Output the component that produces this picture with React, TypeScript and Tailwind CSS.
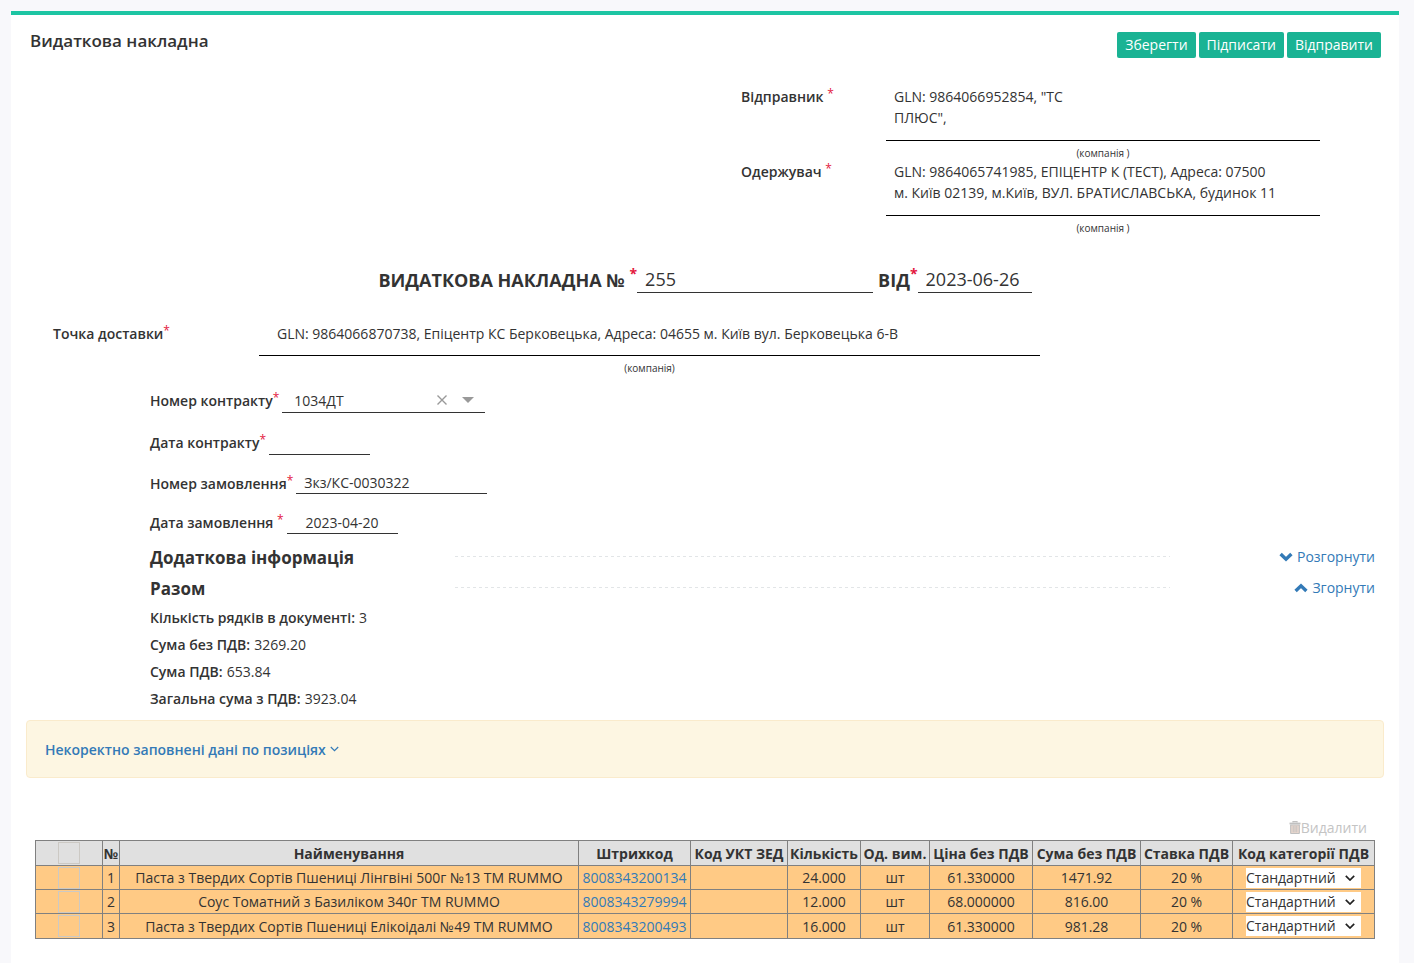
import { useState } from "react";
import type { ReactNode } from "react";

const rows = [
  { n: 1, name: "Паста з Твердих Сортів Пшениці Лінгвіні 500г №13 ТМ RUMMO", code: "8008343200134", qty: "24.000", price: "61.330000", sum: "1471.92" },
  { n: 2, name: "Соус Томатний з Базиліком 340г ТМ RUMMO", code: "8008343279994", qty: "12.000", price: "68.000000", sum: "816.00" },
  { n: 3, name: "Паста з Твердих Сортів Пшениці Елікоідалі №49 ТМ RUMMO", code: "8008343200493", qty: "16.000", price: "61.330000", sum: "981.28" },
];

const totals = [
  ["Кількість рядків в документі:", "3"],
  ["Сума без ПДВ:", "3269.20"],
  ["Сума ПДВ:", "653.84"],
  ["Загальна сума з ПДВ:", "3923.04"],
];

const headings = ["Штрихкод", "Код УКТ ЗЕД", "Кількість", "Од. вим.", "Ціна без ПДВ", "Сума без ПДВ", "Ставка ПДВ", "Код категорії ПДВ"];

function Star() {
  return <sup className="-top-1 text-xs font-normal leading-none text-[#e3173e]">*</sup>;
}

function Chevron({ up }: { up: boolean }) {
  return (
    <svg viewBox="0 0 14 10" className="h-2.5 w-3.5" fill="none" stroke="currentColor" strokeWidth="3.4" aria-hidden="true">
      <path d={up ? "M1.6 8 7 2.8 12.4 8" : "M1.6 2 7 7.2 12.4 2"} />
    </svg>
  );
}

function Trash() {
  return (
    <svg viewBox="0 0 12 13" className="h-[13px] w-3" aria-hidden="true">
      <path d="M4 1.6V.7H8V1.6" fill="none" stroke="#c0c0c0" strokeWidth="1.2" />
      <path d="M.5 1.6H11.5V3.4H.5Z" fill="#c0c0c0" />
      <path d="M1.7 4H10.3V11.8Q10.3 12.6 9.5 12.6H2.5Q1.7 12.6 1.7 11.8Z" fill="#ecd9cf" stroke="#c0c0c0" strokeWidth="1.2" />
      <path d="M4.2 5V11.4M6 5V11.4M7.8 5V11.4" stroke="#c0c0c0" strokeWidth="0.9" />
    </svg>
  );
}

function Party({ label, children }: { label: string; children: ReactNode }) {
  return (
    <div className="flex">
      <div className="w-[145px] font-semibold">
        {label} <Star />
      </div>
      <div className="w-[434px]">
        <div className="border-b border-black px-2 pb-3">{children}</div>
        <div className="h-5 pt-1 text-center text-[10px] leading-4">(компанія )</div>
      </div>
    </div>
  );
}

function Field({ id, label, className, children }: { id: string; label: string; className: string; children: ReactNode }) {
  return (
    <div className={`flex items-stretch gap-[3px] ${className}`}>
      <label htmlFor={id} className="self-center whitespace-pre font-semibold">
        {label}
        <Star />
      </label>
      {children}
    </div>
  );
}

function Section({ title, open, onToggle }: { title: string; open: boolean; onToggle: () => void }) {
  return (
    <div className="flex h-[31px] items-center pr-6">
      <h2 className="w-[305px] text-[17px] font-bold">{title}</h2>
      <svg className="mb-0.5 h-px flex-1" aria-hidden="true">
        <line x1="0" y1="0.5" x2="100%" y2="0.5" stroke="#e2e5e7" strokeWidth="1" strokeDasharray="3 3" />
      </svg>
      <button type="button" onClick={onToggle} className="mb-0.5 flex w-[205px] items-center justify-end gap-1 text-[#337ab7]">
        <Chevron up={open} />
        {open ? "Згорнути" : "Розгорнути"}
      </button>
    </div>
  );
}

const box = "block mx-auto size-[22px] appearance-none border border-[#ccc9c4] checked:bg-[#1ab394]";

export default function App() {
  const [extra, setExtra] = useState(false);
  const [total, setTotal] = useState(true);
  const [contract, setContract] = useState("1034ДТ");

  return (
    <div className="min-h-screen bg-[#f8f8fb] pt-[11px] pr-[15px] pl-[11px] font-['Open_Sans',sans-serif] text-sm leading-[21px] text-[#333333]">
      <main className="min-h-[952px] border-t-4 border-[#1dc5a3] bg-white pb-6">
        <header className="flex h-[71px] items-start justify-between pt-[17px] pr-[18px] pl-[19px]">
          <h1 className="text-[17px] leading-[18px] font-semibold">Видаткова накладна</h1>
          <div className="flex gap-[3px]">
            {["Зберегти", "Підписати", "Відправити"].map((t) => (
              <button key={t} type="button" className="h-[26px] rounded-xs bg-[#1ab394] px-2 pb-0.5 text-white">
                {t}
              </button>
            ))}
          </div>
        </header>

        <div className="flex flex-col items-end pr-[79px]">
          <Party label="Відправник">
            GLN: 9864066952854, "ТС
            <br />
            ПЛЮС",
          </Party>
          <Party label="Одержувач">
            GLN: 9864065741985, ЕПІЦЕНТР К (ТЕСТ), Адреса: 07500
            <br />
            м. Київ 02139, м.Київ, ВУЛ. БРАТИСЛАВСЬКА, будинок 11
          </Party>
        </div>

        <div className="mt-[30px] flex h-[27px] justify-center text-lg font-bold">
          <label htmlFor="number" className="self-center whitespace-pre">
            ВИДАТКОВА НАКЛАДНА № <sup className="-top-2 text-sm leading-none text-[#e3173e]">*</sup>
          </label>
          <input id="number" defaultValue="255" className="w-[236px] border-b border-[#333333] px-2 font-normal" />
          <label htmlFor="date" className="ml-[5px] self-center">
            ВІД<sup className="-top-2 text-sm leading-none text-[#e3173e]">*</sup>
          </label>
          <input id="date" defaultValue="2023-06-26" className="w-[114px] border-b border-[#333333] px-2 font-normal" />
        </div>

        <div className="mt-[30px] flex pl-[42px]">
          <div className="w-[206px] font-semibold">
            Точка доставки
            <Star />
          </div>
          <div className="w-[781px]">
            <div className="border-b border-black pb-[11px] pl-[18px]">
              GLN: 9864066870738, Епіцентр КС Берковецька, Адреса: 04655 м. Київ вул. Берковецька 6-В
            </div>
            <div className="h-5 pt-1 text-center text-[10px] leading-4">(компанія)</div>
          </div>
        </div>

        <section className="mt-3 pl-[139px]">
          <Field id="contract" label="Номер контракту" className="mb-[17px] h-[25px]">
            <div className="flex w-[203px] items-center border-b border-[#333333] pr-[11px] pl-3">
              <input id="contract" value={contract} onChange={(e) => setContract(e.target.value)} className="min-w-0 flex-1" />
              <button type="button" aria-label="Очистити" onClick={() => setContract("")} className="mr-[14px]">
                <svg viewBox="0 0 12 12" className="size-3" stroke="#999999" strokeWidth="1.4">
                  <path d="M1.5 1.5 10.5 10.5M10.5 1.5 1.5 10.5" />
                </svg>
              </button>
              <button type="button" aria-label="Відкрити список">
                <svg viewBox="0 0 12 6" className="h-1.5 w-3" fill="#999999">
                  <path d="M0 0H12L6 6Z" />
                </svg>
              </button>
            </div>
          </Field>
          <Field id="cdate" label="Дата контракту" className="mb-[17px] h-[25px]">
            <input id="cdate" className="w-[101px] border-b border-[#333333] px-2" />
          </Field>
          <Field id="order" label="Номер замовлення" className="mb-[17px] h-[22px]">
            <input id="order" defaultValue="Зкз/КС-0030322" className="w-[191px] border-b border-[#333333] px-2" />
          </Field>
          <Field id="odate" label="Дата замовлення " className="mb-2 h-[23px]">
            <input id="odate" defaultValue="2023-04-20" className="w-[111px] border-b border-[#333333] text-center" />
          </Field>

          <Section title="Додаткова інформація" open={extra} onToggle={() => setExtra(!extra)} />
          <Section title="Разом" open={total} onToggle={() => setTotal(!total)} />
          {total && (
            <dl>
              {totals.map(([k, v]) => (
                <div key={k} className="flex h-[27px] items-center gap-1">
                  <dt className="font-semibold">{k}</dt>
                  <dd>{v}</dd>
                </div>
              ))}
            </dl>
          )}
        </section>

        <div className="mx-[15px] mt-2 flex h-[58px] items-center rounded border border-[#faebcc] bg-[#fdf6e2] px-[18px]">
          <button type="button" className="flex items-center gap-1 font-semibold text-[#337ab7]">
            Некоректно заповнені дані по позиціях
            <svg viewBox="0 0 9 6" className="h-1.5 w-[9px]" fill="none" stroke="currentColor" strokeWidth="1.2">
              <path d="M.8 1 4.5 4.7 8.2 1" />
            </svg>
          </button>
        </div>

        <section className="mt-[37px] pr-6 pl-6">
          <div className="flex h-[25px] items-center justify-end pr-2">
            <button type="button" disabled className="flex items-center text-[#c4c4c4]">
              <Trash />
              Видалити
            </button>
          </div>
          <table className="w-full table-fixed border-collapse text-center whitespace-nowrap [&_td]:border [&_td]:border-[#808080] [&_td]:p-0 [&_th]:border [&_th]:border-[#808080] [&_th]:p-0">
            <colgroup>
              <col className="w-[67px]" />
              <col className="w-[17px]" />
              <col />
              <col className="w-[112px]" />
              <col className="w-[97px]" />
              <col className="w-[73px]" />
              <col className="w-[69px]" />
              <col className="w-[103px]" />
              <col className="w-[108px]" />
              <col className="w-[92px]" />
              <col className="w-[142px]" />
            </colgroup>
            <thead>
              <tr className="h-[25px] bg-[#e0e0e0]">
                <th>
                  <input type="checkbox" aria-label="Вибрати всі" className={box} />
                </th>
                <th>№</th>
                <th>Найменування</th>
                {headings.map((h) => (
                  <th key={h}>{h}</th>
                ))}
              </tr>
            </thead>
            <tbody>
              {rows.map((r) => (
                <tr key={r.n} className="h-6 bg-[#ffca85] last:h-[25px]">
                  <td>
                    <input type="checkbox" aria-label={`Вибрати рядок ${r.n}`} className={box} />
                  </td>
                  <td>{r.n}</td>
                  <td>{r.name}</td>
                  <td>
                    <a href="#item" className="text-[#337ab7]">
                      {r.code}
                    </a>
                  </td>
                  <td></td>
                  <td>{r.qty}</td>
                  <td>шт</td>
                  <td>{r.price}</td>
                  <td>{r.sum}</td>
                  <td>20 %</td>
                  <td>
                    <div className="relative mx-auto h-5 w-[115px] bg-white">
                      <select aria-label={`Код категорії ПДВ ${r.n}`} className="block h-5 w-full appearance-none pr-5 leading-5">
                        <option>Стандартний</option>
                      </select>
                      <svg viewBox="0 0 10 6" className="pointer-events-none absolute top-[7px] right-1.5 h-1.5 w-2.5" fill="none" stroke="#222222" strokeWidth="1.7" aria-hidden="true">
                        <path d="M.8.8 5 5 9.2.8" />
                      </svg>
                    </div>
                  </td>
                </tr>
              ))}
            </tbody>
          </table>
        </section>
      </main>
    </div>
  );
}
